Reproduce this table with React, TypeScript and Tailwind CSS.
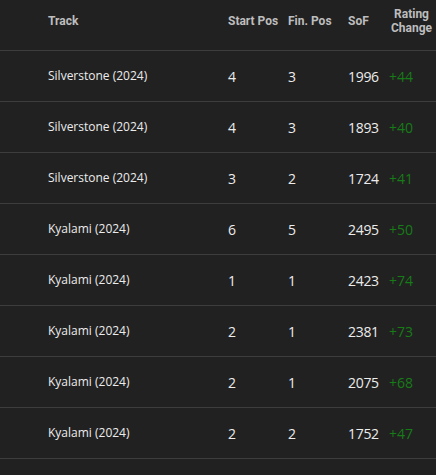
const rows = [
  { track: 'Silverstone (2024)', start: 4, fin: 3, sof: 1996, change: '+44' },
  { track: 'Silverstone (2024)', start: 4, fin: 3, sof: 1893, change: '+40' },
  { track: 'Silverstone (2024)', start: 3, fin: 2, sof: 1724, change: '+41' },
  { track: 'Kyalami (2024)', start: 6, fin: 5, sof: 2495, change: '+50' },
  { track: 'Kyalami (2024)', start: 1, fin: 1, sof: 2423, change: '+74' },
  { track: 'Kyalami (2024)', start: 2, fin: 1, sof: 2381, change: '+73' },
  { track: 'Kyalami (2024)', start: 2, fin: 1, sof: 2075, change: '+68' },
  { track: 'Kyalami (2024)', start: 2, fin: 2, sof: 1752, change: '+47' },
];

export default function App() {
  return (
    <div className="w-[436px] h-[475px] overflow-hidden bg-[#212121]">
      {/* Header */}
      <div className="flex items-center h-[51px] pb-[8px] border-b border-[#3d3d3d] text-[12px] font-bold text-[#bdbdbd] font-['Roboto',sans-serif]">
        <div className="w-[48px]" />
        <div className="w-[180px]">Track</div>
        <div className="w-[60px]">Start Pos</div>
        <div className="w-[60px]">Fin. Pos</div>
        <div className="w-[41px]">SoF</div>
        <div className="w-[47px] text-center leading-[14px] whitespace-nowrap -ml-[1px]">
          Rating
          <br />
          Change
        </div>
      </div>

      {/* Rows */}
      {rows.map((r, i) => (
        <div
          key={i}
          className="flex items-center h-[51px] border-b border-[#3d3d3d] text-[#ececec] font-['Open_Sans',sans-serif]"
        >
          <div className="w-[48px]" />
          <div className="w-[180px] text-[12px]">{r.track}</div>
          <div className="w-[60px] text-[14px]">{r.start}</div>
          <div className="w-[60px] text-[14px]">{r.fin}</div>
          <div className="w-[41px] text-[14px] tracking-[-0.3px]">{r.sof}</div>
          <div className="w-[47px] text-[14px] text-[#177c17]">{r.change}</div>
        </div>
      ))}
    </div>
  );
}
